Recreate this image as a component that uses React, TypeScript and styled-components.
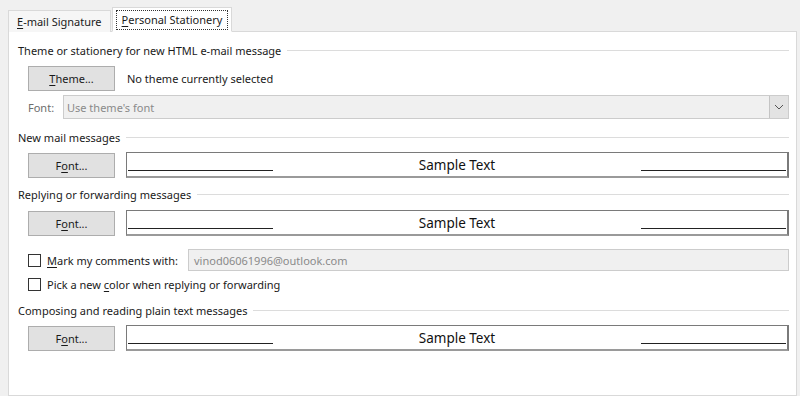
import React from "react";
import styled, { createGlobalStyle } from "styled-components";

const Global = createGlobalStyle`
  html, body { margin: 0; padding: 0; background: #f0f0f0; }
  body { font-family: "Noto Sans", "Segoe UI", sans-serif; font-size: 11px; color: #1a1a1a; }
  * { box-sizing: border-box; }
`;

const Window = styled.div`
  width: 800px;
  height: 396px;
  overflow: hidden;
  background: #f0f0f0;
  padding: 8px 3px 0 8px;
  display: flex;
  flex-direction: column;
`;

const TabBar = styled.div`
  display: flex;
  align-items: flex-end;
  height: 24px;
  position: relative;
  z-index: 1;
  margin-bottom: -1px;
`;

const Tab = styled.div<{ $active?: boolean }>`
  height: ${(p) => (p.$active ? "25px" : "22px")};
  padding: 0 ${(p) => (p.$active ? "3px" : "8px")};
  display: flex;
  align-items: center;
  background: ${(p) => (p.$active ? "#ffffff" : "#f6f6f6")};
  border: 1px solid #d9d9d9;
  border-bottom: ${(p) => (p.$active ? "1px solid #ffffff" : "none")};
  margin-left: ${(p) => (p.$active ? "1px" : "0")};
  white-space: nowrap;
`;

const FocusText = styled.span`
  border: 1px dotted #333;
  padding: 1px 5px 2px;
`;

const U = styled.span`
  text-decoration: underline;
  text-underline-offset: 2px;
`;

const Panel = styled.div`
  flex: 1;
  background: #ffffff;
  border: 1px solid #d9d9d9;
  padding: 10px 7px 0 9px;
  display: flex;
  flex-direction: column;
`;

const Header = styled.div<{ $mt: number }>`
  display: flex;
  align-items: center;
  gap: 6px;
  height: 16px;
  margin-top: ${(p) => p.$mt}px;
  white-space: nowrap;
  &::after {
    content: "";
    flex: 1;
    height: 1px;
    background: #dcdcdc;
  }
`;

const Row = styled.div<{ $mt: number; $h?: number }>`
  display: flex;
  align-items: center;
  margin-top: ${(p) => p.$mt}px;
  padding-left: 10px;
  height: ${(p) => p.$h ?? 26}px;
`;

const Button = styled.div`
  width: 87px;
  height: 25px;
  background: #e1e1e1;
  border: 1px solid #adadad;
  display: flex;
  align-items: center;
  justify-content: center;
  flex-shrink: 0;
`;

const Note = styled.span`
  margin-left: 12px;
`;

const DimLabel = styled.span`
  color: #6d6d6d;
  width: 35px;
  flex-shrink: 0;
`;

const Combo = styled.div`
  flex: 1;
  height: 24px;
  background: #f0f0f0;
  border: 1px solid #cccccc;
  display: flex;
  align-items: center;
  padding-left: 3px;
  color: #8a8a8a;
`;

const ComboText = styled.span`
  flex: 1;
`;

const ComboArrow = styled.div`
  width: 19px;
  height: 22px;
  border-left: 1px solid #c4c4c4;
  background: #e3e3e3;
  display: flex;
  align-items: center;
  justify-content: center;
`;

const SampleBox = styled.div`
  flex: 1;
  height: 26px;
  margin-left: 11px;
  border: 1px solid #7a7a7a;
  border-right-width: 2px;
  border-bottom-width: 2px;
  border-bottom-color: #9a9a9a;
  display: flex;
  align-items: center;
  padding: 0 1px;
`;

const SampleLine = styled.div`
  width: 145px;
  height: 1px;
  background: #222;
  flex-shrink: 0;
  align-self: flex-end;
  margin-bottom: 5px;
`;

const SampleText = styled.div`
  flex: 1;
  text-align: center;
  font-size: 13.5px;
  color: #111;
`;

const Check = styled.div`
  width: 13px;
  height: 13px;
  border: 1px solid #333;
  background: #fff;
  flex-shrink: 0;
  margin-right: 6px;
`;

const CheckLabel = styled.span<{ $w?: number }>`
  width: ${(p) => (p.$w ? `${p.$w}px` : "auto")};
  flex-shrink: 0;
  white-space: nowrap;
`;

const EmailInput = styled.div`
  flex: 1;
  height: 22px;
  background: #f0f0f0;
  border: 1px solid #cccccc;
  color: #8a8a8a;
  display: flex;
  align-items: center;
  padding-left: 5px;
`;

const Chevron = () => (
  <svg width="10" height="6" viewBox="0 0 10 6">
    <path d="M1 1 L5 5 L9 1" fill="none" stroke="#555" strokeWidth="1" />
  </svg>
);

const FontRow = ({ mt }: { mt: number }) => (
  <Row $mt={mt}>
    <Button>
      <span>F<U>o</U>nt...</span>
    </Button>
    <SampleBox>
      <SampleLine />
      <SampleText>Sample Text</SampleText>
      <SampleLine />
    </SampleBox>
  </Row>
);

export default function App() {
  return (
    <>
      <Global />
      <Window>
        <TabBar>
          <Tab>
            <span><U>E</U>-mail Signature</span>
          </Tab>
          <Tab $active>
            <FocusText><U>P</U>ersonal Stationery</FocusText>
          </Tab>
        </TabBar>
        <Panel>
          <Header $mt={0}>Theme or stationery for new HTML e-mail message</Header>
          <Row $mt={8} $h={25}>
            <Button>
              <span><U>T</U>heme...</span>
            </Button>
            <Note>No theme currently selected</Note>
          </Row>
          <Row $mt={4} $h={24}>
            <DimLabel>Font:</DimLabel>
            <Combo>
              <ComboText>Use theme's font</ComboText>
              <ComboArrow>
                <Chevron />
              </ComboArrow>
            </Combo>
          </Row>
          <Header $mt={10}>New mail messages</Header>
          <FontRow mt={7} />
          <Header $mt={8}>Replying or forwarding messages</Header>
          <FontRow mt={8} />
          <Row $mt={13} $h={22}>
            <Check />
            <CheckLabel $w={141}>
              <U>M</U>ark my comments with:
            </CheckLabel>
            <EmailInput>vinod06061996@outlook.com</EmailInput>
          </Row>
          <Row $mt={5} $h={16}>
            <Check />
            <CheckLabel>
              Pick a new <U>c</U>olor when replying or forwarding
            </CheckLabel>
          </Row>
          <Header $mt={10}>Composing and reading plain text messages</Header>
          <FontRow mt={7} />
        </Panel>
      </Window>
    </>
  );
}
